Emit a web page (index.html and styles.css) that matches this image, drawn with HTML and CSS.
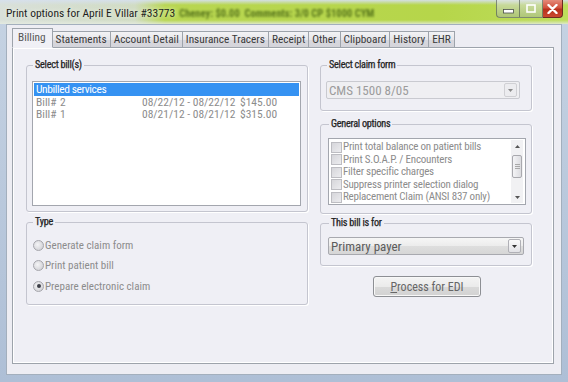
FILE: index.html
```html
<!DOCTYPE html>
<html lang="en">
<head>
    <meta charset="UTF-8">
    <meta name="viewport" content="width=device-width, initial-scale=1.0">
    <title>Print options for April E Villar #33773</title>
    <link rel="stylesheet" href="styles.css">
</head>
<body>
    <div class="window">
        <div class="titlebar">
            <span class="title">Print options for April E Villar #33773</span>
            <span class="behind">Cheney: $0.00 &nbsp;Comments: 3/0 CP $1000 CYM</span>
            <div class="caption">
                <span class="cap-btn min">
                    <svg width="11" height="5" viewBox="0 0 11 5"><rect x="0.5" y="0.5" width="10" height="3.5" fill="#fff" stroke="#4a4f4a" stroke-width="0.8"/></svg>
                </span>
                <span class="cap-btn max">
                    <svg width="10" height="9" viewBox="0 0 10 9"><rect x="1" y="1" width="8" height="7" fill="none" stroke="#fff" stroke-width="1.6"/></svg>
                </span>
                <span class="cap-btn close">
                    <svg width="11" height="10" viewBox="0 0 11 10"><path d="M1.5 1 L9.5 9 M9.5 1 L1.5 9" stroke="#fff" stroke-width="2.4" stroke-linecap="round"/></svg>
                </span>
            </div>
        </div>

        <div class="client">
            <div class="tabs">
                <span class="tab active">Billing</span>
                <span class="tab">Statements</span>
                <span class="tab">Account Detail</span>
                <span class="tab">Insurance Tracers</span>
                <span class="tab">Receipt</span>
                <span class="tab">Other</span>
                <span class="tab">Clipboard</span>
                <span class="tab">History</span>
                <span class="tab">EHR</span>
            </div>

            <div class="panel">
                <div class="col col-left">
                    <fieldset class="group bills">
                        <legend>Select bill(s)</legend>
                        <div class="listbox bill-list">
                            <div class="row selected">Unbilled services</div>
                            <div class="row bill">
                                <span class="bill-no">Bill#</span><span class="bill-id">2</span>
                                <span class="bill-dates">08/22/12 - 08/22/12</span>
                                <span class="bill-amt">$145.00</span>
                            </div>
                            <div class="row bill">
                                <span class="bill-no">Bill#</span><span class="bill-id">1</span>
                                <span class="bill-dates">08/21/12 - 08/21/12</span>
                                <span class="bill-amt">$315.00</span>
                            </div>
                        </div>
                    </fieldset>

                    <fieldset class="group type">
                        <legend>Type</legend>
                        <div class="radio-row"><span class="radio"></span>Generate claim form</div>
                        <div class="radio-row"><span class="radio"></span>Print patient bill</div>
                        <div class="radio-row"><span class="radio checked"></span>Prepare electronic claim</div>
                    </fieldset>
                </div>

                <div class="col col-right">
                    <fieldset class="group claim">
                        <legend>Select claim form</legend>
                        <div class="combo disabled">
                            <span class="combo-text">CMS 1500 8/05</span>
                            <span class="combo-btn">
                                <svg width="5" height="3" viewBox="0 0 5 3"><path d="M0 0 H5 L2.5 3 Z" fill="#8a8a8a"/></svg>
                            </span>
                        </div>
                    </fieldset>

                    <fieldset class="group options">
                        <legend>General options</legend>
                        <div class="listbox option-list">
                            <div class="option-items">
                                <div class="option"><span class="check"></span>Print total balance on patient bills</div>
                                <div class="option"><span class="check"></span>Print S.O.A.P. / Encounters</div>
                                <div class="option"><span class="check"></span>Filter specific charges</div>
                                <div class="option"><span class="check"></span>Suppress printer selection dialog</div>
                                <div class="option"><span class="check"></span>Replacement Claim (ANSI 837 only)</div>
                            </div>
                            <div class="scrollbar">
                                <span class="arrow">
                                    <svg width="5" height="3" viewBox="0 0 5 3"><path d="M0 3 H5 L2.5 0 Z" fill="#555"/></svg>
                                </span>
                                <span class="thumb">
                                    <svg width="5" height="5" viewBox="0 0 5 5"><path d="M0 0.5 H5 M0 2.5 H5 M0 4.5 H5" stroke="#a8a8a8" stroke-width="1"/></svg>
                                </span>
                                <span class="track"></span>
                                <span class="arrow">
                                    <svg width="5" height="3" viewBox="0 0 5 3"><path d="M0 0 H5 L2.5 3 Z" fill="#555"/></svg>
                                </span>
                            </div>
                        </div>
                    </fieldset>

                    <fieldset class="group payer">
                        <legend>This bill is for</legend>
                        <div class="combo">
                            <span class="combo-text">Primary payer</span>
                            <span class="combo-btn">
                                <svg width="5" height="3" viewBox="0 0 5 3"><path d="M0 0 H5 L2.5 3 Z" fill="#333"/></svg>
                            </span>
                        </div>
                    </fieldset>

                    <div class="actions">
                        <button class="process"><u>P</u>rocess for EDI</button>
                    </div>
                </div>
            </div>
        </div>
    </div>
</body>
</html>
```

FILE: styles.css
```css
body {
    margin: 0;
    padding: 0;
    font-family: Roboto, "Liberation Sans", Arial, sans-serif;
    font-stretch: 80%;
    font-size: 11.5px;
    color: #333;
    background: #c3d0df;
}

.window {
    width: 568px;
    height: 382px;
    display: flex;
    flex-direction: column;
    background: linear-gradient(to bottom, #c6d3e3, #aebfd6);
    overflow: hidden;
}

/* title bar */

.titlebar {
    height: 24px;
    flex-shrink: 0;
    display: flex;
    align-items: center;
    background:
        linear-gradient(to bottom, rgba(214, 224, 236, 0.95) 0, rgba(214, 224, 236, 0) 5px, rgba(255, 255, 255, 0) 20px, rgba(230, 236, 225, 0.8) 24px),
        linear-gradient(to right, #d9e0da 0, #d1dcc4 135px, #b8d651 165px, #b6d64a 440px, #bedd5c 100%);
    overflow: hidden;
}

.title {
    margin-left: 6px;
    padding-top: 2px;
    color: #1e1e1e;
    font-size: 11.5px;
    white-space: nowrap;
    text-shadow: 0 0 4px #f2f6e8;
}

.behind {
    margin-left: 4px;
    padding-top: 3px;
    font-weight: bold;
    font-size: 10.5px;
    color: #2f4d06;
    white-space: nowrap;
    filter: blur(1.3px);
    opacity: 0.7;
}

.caption {
    margin-left: auto;
    margin-right: 5px;
    align-self: flex-start;
    display: flex;
}

.cap-btn {
    height: 18px;
    display: flex;
    align-items: center;
    justify-content: center;
    border: 1px solid rgba(70, 80, 75, 0.6);
    border-top: none;
    box-sizing: border-box;
    background: linear-gradient(to bottom, rgba(225, 230, 225, 0.6), rgba(160, 175, 160, 0.45));
}

.cap-btn.min {
    width: 24px;
    border-radius: 0 0 0 4px;
    padding-top: 5px;
}

.cap-btn.max {
    width: 23px;
    border-left: none;
}

.cap-btn.close {
    width: 20px;
    border-left: none;
    border-radius: 0 0 4px 0;
    background: linear-gradient(to bottom, #e48a7a 0, #d2523d 45%, #b8301d 55%, #c9482f 100%);
    border-color: #6d2a20;
}

/* client area */

.client {
    flex: 1;
    margin: 0 6px 7px 6px;
    padding: 4px 7px 10px 5px;
    background: #ededf3;
    border: 1px solid #a3afbd;
    display: flex;
    flex-direction: column;
}

.tabs {
    display: flex;
    align-items: flex-end;
    height: 19px;
    position: relative;
    z-index: 1;
    margin-bottom: -1px;
}

.tab {
    height: 17px;
    box-sizing: border-box;
    padding: 0 3px;
    font-size: 11.3px;
    line-height: 16px;
    color: #3a3a3a;
    border: 1px solid #9da3ab;
    border-left: none;
    background: linear-gradient(to bottom, #f3f3f5 0, #e6e6ea 50%, #d8d8de 51%, #d4d4da 100%);
    white-space: nowrap;
}

.tab.active {
    height: 20px;
    padding: 0 6px 0 5px;
    line-height: 18px;
    border-left: 1px solid #9da3ab;
    border-bottom: 1px solid #f0f0f6;
    background: #f0f0f6;
    color: #555;
}

.panel {
    flex: 1;
    display: flex;
    gap: 12px;
    padding: 11px 0 0 13px;
    background: #efeff5;
    border: 1px solid #9da3ab;
    box-shadow: inset 1px 1px 0 #ffffff, inset -1px -1px 0 #ffffff;
}

.col {
    display: flex;
    flex-direction: column;
}

.col-left {
    width: 282px;
}

.col-right {
    width: 212px;
}

/* group boxes */

.group {
    margin: 0;
    border: 1px solid #c4c5cf;
    border-radius: 3px;
    box-shadow: 1px 1px 0 #ffffff;
}

.group legend {
    margin-left: 1px;
    padding: 0 2px;
    font-size: 10.2px;
    letter-spacing: -0.25px;
    line-height: 12px;
    color: #222;
    -webkit-text-stroke: 0.25px #222;
}

.group.bills {
    padding: 10px 6px 5px 5px;
}

.group.type {
    margin-top: 4px;
    padding: 7px 6px 7px 5px;
}

.group.claim {
    padding: 10px 11px 11px 5px;
}

.group.options {
    margin-top: 7px;
    padding: 8px 5px 8px 7px;
}

.group.payer {
    margin-top: 3px;
    padding: 8px 7px 10px 7px;
}

/* list boxes */

.listbox {
    background: #ffffff;
    border: 1px solid #a3a6ae;
    box-sizing: border-box;
}

.bill-list {
    height: 125px;
    padding: 1px;
}

.row {
    height: 12.5px;
    line-height: 12.5px;
    padding-left: 2px;
    color: #8c8c8c;
    white-space: nowrap;
}

.row.selected {
    background: #3592f2;
    color: #ffffff;
    letter-spacing: -0.4px;
}

.row.bill {
    display: flex;
}

.bill-no {
    width: 24px;
}

.bill-id {
    width: 82px;
}

.bill-dates {
    width: 98px;
}

.option-list {
    height: 67px;
    display: flex;
}

.option-items {
    flex: 1;
    padding: 2px 0 0 2px;
}

.option {
    height: 12.5px;
    line-height: 12.5px;
    display: flex;
    align-items: center;
    font-size: 11px;
    letter-spacing: -0.22px;
    color: #8c8c8c;
    white-space: nowrap;
}

.check {
    width: 9px;
    height: 9px;
    margin-right: 1px;
    border: 1px solid #bdbdc2;
    background: linear-gradient(135deg, #d6d6da, #ececef);
}

.scrollbar {
    width: 12px;
    margin: 1px 2px 1px 0;
    display: flex;
    flex-direction: column;
    background: #f1f1f3;
}

.scrollbar .arrow {
    height: 12px;
    display: flex;
    align-items: center;
    justify-content: center;
}

.scrollbar .thumb {
    height: 21px;
    margin: 3px 1px 0 1px;
    display: flex;
    align-items: center;
    justify-content: center;
    border: 1px solid #a9a9ae;
    border-radius: 2px;
    background: linear-gradient(to right, #f4f4f6, #dcdce0);
}

.scrollbar .track {
    flex: 1;
}

/* radios */

.radio-row {
    height: 20.5px;
    display: flex;
    align-items: center;
    color: #8c8c8c;
    font-size: 11px;
    padding-left: 1px;
}

.radio {
    width: 9px;
    height: 9px;
    margin-right: 1px;
    border: 1px solid #a6a6ac;
    border-radius: 50%;
    background: radial-gradient(circle at 40% 40%, #f4f4f6, #c9c9ce);
    display: flex;
    align-items: center;
    justify-content: center;
}

.radio.checked::after {
    content: "";
    width: 4px;
    height: 4px;
    border-radius: 50%;
    background: #3d3f48;
}

/* combos */

.combo {
    height: 18px;
    box-sizing: border-box;
    display: flex;
    align-items: center;
    border: 1px solid #a8a9af;
    border-radius: 2px;
    background: linear-gradient(to bottom, #f6f6f6 0, #ececec 50%, #dedede 51%, #d6d6d6 100%);
}

.combo.disabled {
    border-color: #c9cad0;
    background: #efeff2;
}

.combo-text {
    flex: 1;
    padding-left: 2px;
    font-size: 13px;
    color: #5c5c5c;
}

.combo.disabled .combo-text {
    color: #9c9c9c;
}

.combo-btn {
    width: 11px;
    height: 12px;
    margin-right: 2px;
    display: flex;
    align-items: center;
    justify-content: center;
    border: 1px solid #b0b0b6;
    border-radius: 2px;
    background: linear-gradient(to bottom, #fafafa, #e2e2e6);
}

.combo.disabled .combo-btn {
    border-color: #d0d0d4;
    background: #ececef;
    margin-right: 2px;
}

/* button */

.actions {
    display: flex;
    justify-content: center;
    margin-top: 10px;
    padding-left: 2px;
}

.process {
    width: 108px;
    height: 21px;
    padding: 0;
    font-family: inherit;
    font-stretch: inherit;
    font-size: 12px;
    color: #666;
    border: 1px solid #8d8f94;
    border-radius: 3px;
    background: linear-gradient(to bottom, #f4f4f4 0, #ebebeb 50%, #dadada 51%, #d2d2d2 100%);
    box-shadow: inset 0 0 0 1px #f8f8f8;
}
```
